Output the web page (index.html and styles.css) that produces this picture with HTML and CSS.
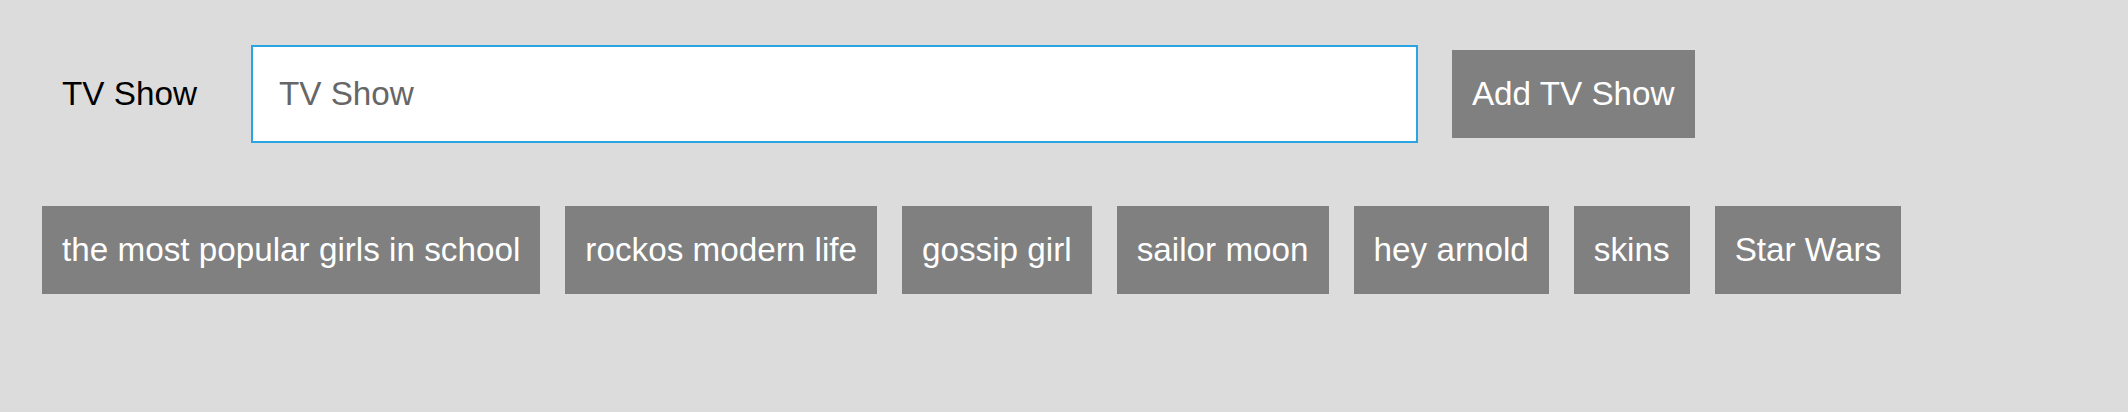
FILE: index.html
```html
<!DOCTYPE html>
<html>
<head>
<meta charset="utf-8">
<link rel="stylesheet" href="styles.css">
</head>
<body>
<div class="app">
  <form class="add-row">
    <label class="field-label" for="show">TV Show</label>
    <input class="show-input" id="show" type="text" placeholder="TV Show">
    <button class="add-btn" type="button">Add TV Show</button>
  </form>
  <ul class="tags">
    <li class="tag">the most popular girls in school</li>
    <li class="tag">rockos modern life</li>
    <li class="tag">gossip girl</li>
    <li class="tag">sailor moon</li>
    <li class="tag">hey arnold</li>
    <li class="tag">skins</li>
    <li class="tag">Star Wars</li>
  </ul>
</div>
</body>
</html>
```
FILE: styles.css
```css
html, body {
  margin: 0;
  padding: 0;
  background: #dcdcdc;
  width: 2128px;
  height: 412px;
  overflow: hidden;
}
body {
  font-family: "Liberation Sans", Arial, sans-serif;
  font-size: 33.25px;
}
.app {
  padding: 45px 0 0 42px;
}
.add-row {
  display: flex;
  align-items: center;
  gap: 34px;
  margin: 0;
}
.field-label {
  padding: 0 20px;
  color: #000;
  line-height: 38px;
}
.show-input {
  box-sizing: border-box;
  width: 1167px;
  height: 98px;
  border: 2px solid #2aa5e2;
  background: #fff;
  padding: 0 26px;
  font-family: "Liberation Sans", Arial, sans-serif;
  font-size: 33.25px;
  color: #333;
  outline: none;
  margin: 0;
}
.show-input::placeholder {
  color: #666666;
  opacity: 1;
}
.add-btn {
  border: 0;
  margin: 0;
  background: #808080;
  color: #fff;
  font-family: "Liberation Sans", Arial, sans-serif;
  font-size: 33.25px;
  line-height: 38px;
  padding: 25px 20px;
}
.tags {
  list-style: none;
  margin: 63px 0 0 0;
  padding: 0;
  display: flex;
  gap: 25px;
}
.tag {
  background: #808080;
  color: #fff;
  line-height: 38px;
  padding: 25px 20px;
  white-space: nowrap;
}
```
